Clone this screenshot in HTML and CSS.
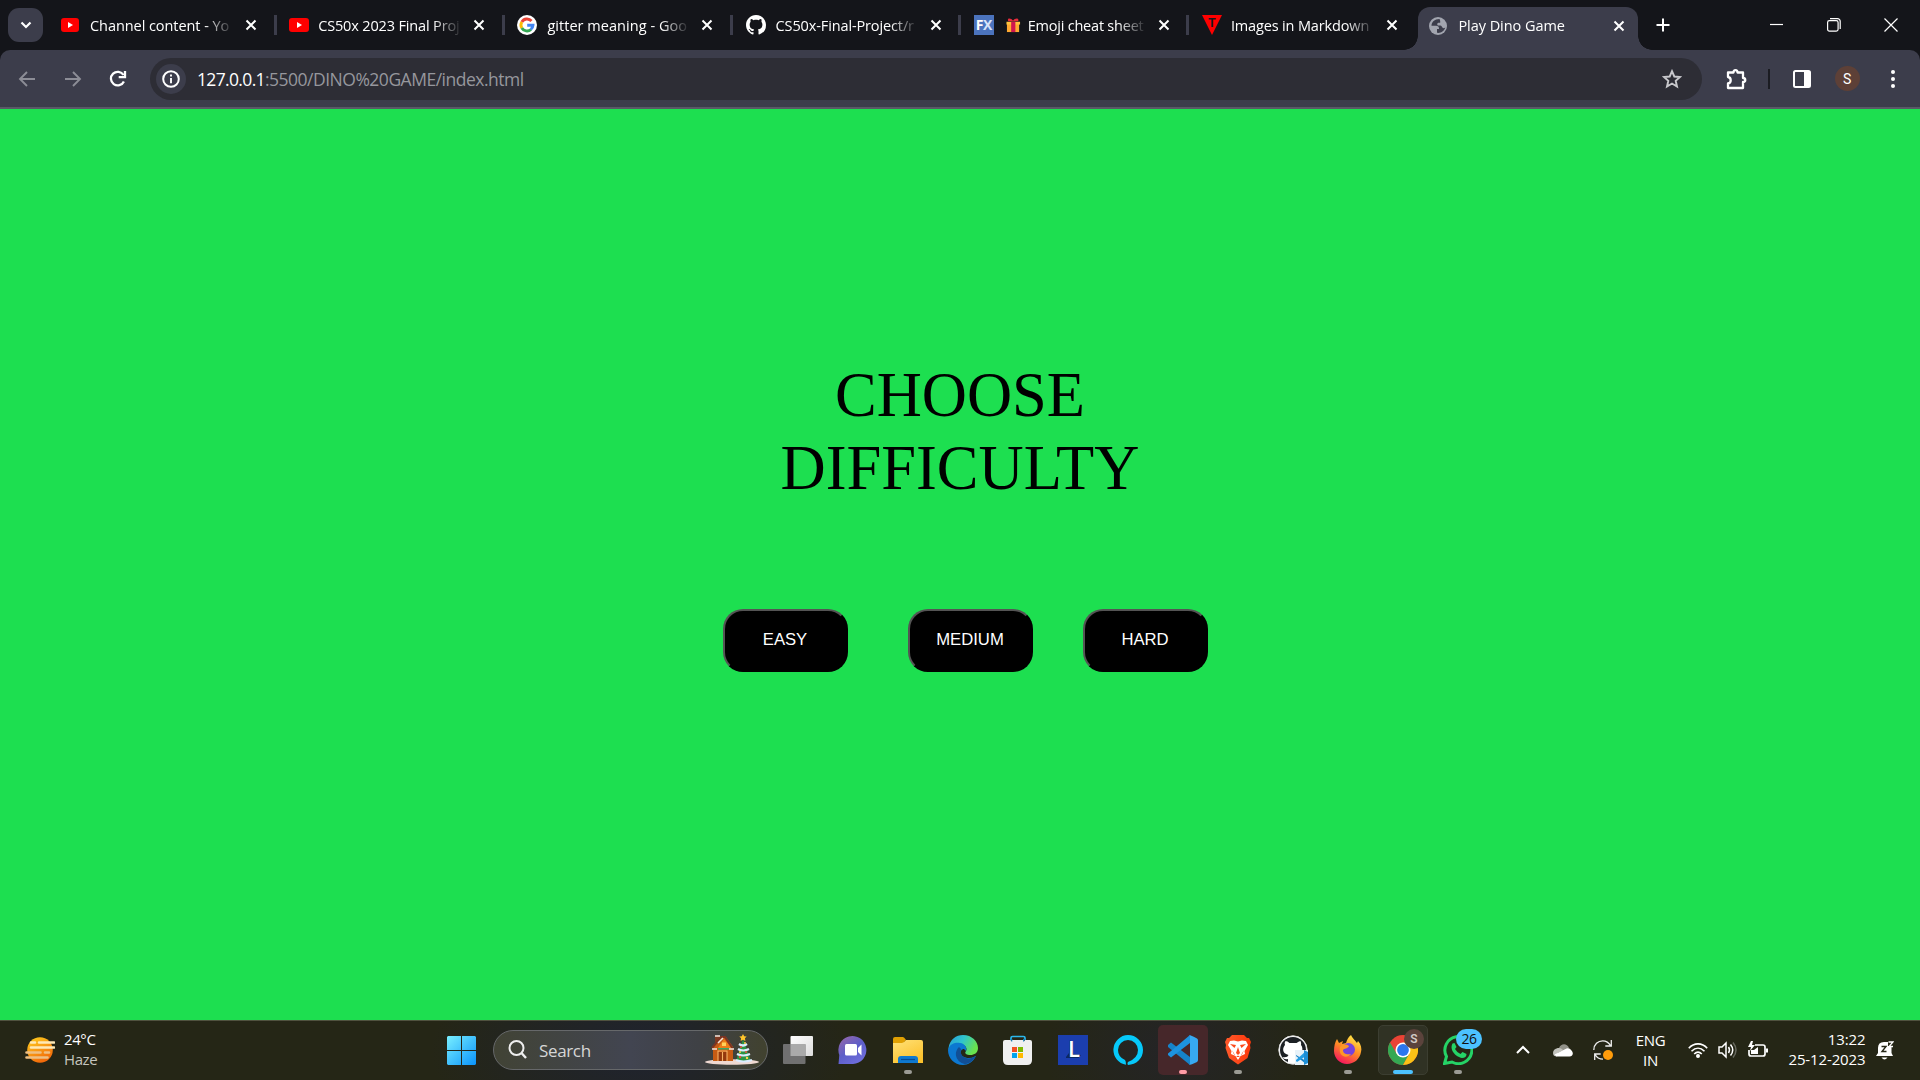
FILE: index.html
```html
<!DOCTYPE html>
<html lang="en">
<head>
<meta charset="utf-8">
<title>Play Dino Game</title>
<link rel="stylesheet" href="styles.css">
</head>
<body>
<header class="tabstrip">
  <div class="tabsearch"><svg width="12" height="8" viewBox="0 0 12 8"><path d="M1.500 1.500 6 6l4.500-4.500" fill="none" stroke="#fff" stroke-width="2.200"/></svg></div>
  <div class="tab">
    <svg class="fav" viewBox="0 0 20 20"><rect x="0" y="3" width="18" height="14" rx="3" fill="#f00"/><path d="M7 7v6l5-3z" fill="#fff"/></svg>
    <span class="title t1">Channel content - Yo</span>
    <svg class="x" viewBox="0 0 12 12"><path d="M1.500 1.500l9 9M10.500 1.500l-9 9"/></svg>
  </div>
  <div class="tab">
    <svg class="fav" viewBox="0 0 20 20"><rect x="0" y="3" width="20" height="14" rx="3" fill="#f00"/><path d="M8 7v6l5-3z" fill="#fff"/></svg>
    <span class="title t2">CS50x 2023 Final Proj</span>
    <svg class="x" viewBox="0 0 12 12"><path d="M1.500 1.500l9 9M10.500 1.500l-9 9"/></svg>
  </div>
  <div class="tab">
    <svg class="fav" viewBox="0 0 20 20"><circle cx="10" cy="10" r="10" fill="#fff"/><g fill="none" stroke-width="2.900"><path d="M4.800 6.900A6 6 0 0 1 14.500 6" stroke="#ea4335"/><path d="M4.800 13A6 6 0 0 1 4.800 6.900" stroke="#fbbc05"/><path d="M14 14.500A6 6 0 0 1 4.800 13" stroke="#34a853"/><path d="M10.200 10.200H16A6 6 0 0 1 13.800 14.500" stroke="#4285f4"/></g></svg>
    <span class="title t3">gitter meaning - Goo</span>
    <svg class="x" viewBox="0 0 12 12"><path d="M1.500 1.500l9 9M10.500 1.500l-9 9"/></svg>
  </div>
  <div class="tab">
    <svg class="fav" viewBox="0 0 16 16"><path fill="#fff" d="M8 0C3.580 0 0 3.580 0 8c0 3.540 2.290 6.530 5.470 7.590.4.070.55-.17.55-.38 0-.19-.01-.82-.01-1.490-2.010.37-2.530-.49-2.690-.94-.09-.23-.48-.94-.82-1.130-.28-.15-.68-.52-.01-.53.63-.01 1.080.58 1.230.82.72 1.210 1.870.87 2.330.66.070-.52.28-.87.51-1.070-1.780-.2-3.640-.89-3.640-3.950 0-.87.31-1.590.82-2.150-.08-.2-.36-1.020.08-2.120 0 0 .67-.21 2.200.82.64-.18 1.320-.27 2-.27s1.360.09 2 .27c1.530-1.040 2.200-.82 2.200-.82.44 1.100.16 1.920.08 2.120.51.56.82 1.270.82 2.150 0 3.070-1.870 3.750-3.650 3.950.29.25.54.73.54 1.480 0 1.070-.01 1.930-.01 2.200 0 .21.15.46.55.38A8.010 8.010 0 0 0 16 8c0-4.420-3.580-8-8-8z"/></svg>
    <span class="title t4">CS50x-Final-Project/r</span>
    <svg class="x" viewBox="0 0 12 12"><path d="M1.500 1.500l9 9M10.500 1.500l-9 9"/></svg>
  </div>
  <div class="tab">
    <span class="fav fx">F<i>X</i></span>
    <span class="title t5"><svg class="gift" viewBox="0 0 16 16"><path d="M1 5h13v10H1z" fill="#ffa931"/><path d="M.500 4h14.500v3H.500z" fill="#ffc33d"/><path d="M5.500 4H10v11H5.500z" fill="#d0164f"/><path d="M2.500 3.500c-2-4 3-4 5-.5 2-3.500 7-3.500 5.500.5z" fill="#e82c3c"/></svg>Emoji cheat sheet</span>
    <svg class="x" viewBox="0 0 12 12"><path d="M1.500 1.500l9 9M10.500 1.500l-9 9"/></svg>
  </div>
  <div class="tab">
    <svg class="fav" viewBox="0 0 20 20"><path d="M0 0h20L10 20z" fill="#f00"/><text x="10" y="12" text-anchor="middle" font-size="12" font-weight="700" font-family="Liberation Sans" fill="#16161b">T</text></svg>
    <span class="title t6">Images in Markdown</span>
    <svg class="x" viewBox="0 0 12 12"><path d="M1.500 1.500l9 9M10.500 1.500l-9 9"/></svg>
  </div>
  <div class="tab active">
    <svg class="fav" viewBox="0 0 20 20"><circle cx="9" cy="10" r="9" fill="#a2a5af"/><path d="M10.500 3C5.500 3 2.500 6 2.500 9.800H6c3.500 0 4 1 4 3.200H8v3.800c4 .6 7.500-2 8.300-5.300-1.300 1-2.800.8-3.300-.5-.4-1.300-1.200-1.500-2.500-1.500H8.800c-1-1-.6-2.400.5-2.700h1.900V4.900c-.2-.6-.3-1.300-.7-1.900z" fill="#3c3d4b"/></svg>
    <span class="title t7">Play Dino Game</span>
    <svg class="x" viewBox="0 0 12 12"><path d="M1.500 1.500l9 9M10.500 1.500l-9 9"/></svg>
  </div>
  <svg class="newtab" viewBox="0 0 14 14"><path d="M7 .5v13M.5 7h13" stroke="#fff" stroke-width="2"/></svg>
  <div class="winctl">
    <svg viewBox="0 0 14 14"><path d="M0 6.500h13" stroke="#fff" stroke-width="1.200"/></svg>
    <svg viewBox="0 0 14 14" fill="none" stroke="#fff" stroke-width="1.200"><rect x=".6" y="2.600" width="10.500" height="10.500" rx="1.800"/><path d="M3 .6h7.500a2.700 2.700 0 0 1 2.700 2.700V11"/></svg>
    <svg viewBox="0 0 14 14"><path d="M.5.500l13 13M13.500.500l-13 13" stroke="#fff" stroke-width="1.200"/></svg>
  </div>
</header>
<nav class="toolbar-wrap">
 <div class="toolbar">
  <svg class="nav" viewBox="0 0 20 20" fill="none" stroke="#8c8d96" stroke-width="1.900"><path d="M18 10H4M10 3l-7 7 7 7"/></svg>
  <svg class="nav" viewBox="0 0 20 20" fill="none" stroke="#8c8d96" stroke-width="1.900"><path d="M2 10h14M10 3l7 7-7 7"/></svg>
  <svg class="nav" viewBox="0 0 20 20" fill="none" stroke="#fff" stroke-width="2.300"><path d="M15.900 12.500A6.800 6.800 0 1 1 15.500 6M17 2v6.200h-6.300"/></svg>
  <div class="omnibox">
    <span class="info"><svg width="18" height="18" viewBox="0 0 18 18"><circle cx="9" cy="9" r="7.800" fill="none" stroke="#fff" stroke-width="2"/><path d="M9 8v5.200M9 4.600v2" stroke="#fff" stroke-width="1.900"/></svg></span>
    <span class="url"><b>127.0.0.1</b>:5500/DINO%20GAME/index.html</span>
    <svg class="star" viewBox="0 0 20 20"><path d="M10 2.200l2.300 5.300 5.700.5-4.300 3.800 1.300 5.700-5-3-5 3 1.300-5.700L2 8l5.700-.5z" fill="none" stroke="#c8c8cc" stroke-width="1.900"/></svg>
  </div>
  <svg class="ext" viewBox="0 0 22 22"><path d="M3 4.500h5.500c0-3.200 4-3.200 4 0h5.500v5.500c3 0 3 4 0 4v6H3v-4.500c3.600-.5 3.600-6 0-6.500z" fill="none" stroke="#fff" stroke-width="2.300" stroke-linejoin="round"/></svg>
  <i class="divider"></i>
  <svg class="panel" viewBox="0 0 18 18"><rect x="1" y="1" width="16" height="16" rx="1.500" fill="none" stroke="#fff" stroke-width="2"/><path d="M11 1h6v16h-6z" fill="#fff"/></svg>
  <span class="avatar">S</span>
  <svg class="dots" viewBox="0 0 6 20" fill="#fff"><circle cx="3" cy="3" r="2"/><circle cx="3" cy="10" r="2"/><circle cx="3" cy="17" r="2"/></svg>
 </div>
</nav>
<main class="page">
  <h1>CHOOSE<br>DIFFICULTY</h1>
  <div class="choices"><button>EASY</button><button>MEDIUM</button><button>HARD</button></div>
</main>
<footer class="taskbar">
  <div class="weather">
    <svg width="30" height="26" viewBox="0 0 30 26"><defs><linearGradient id="sun" x1="0" y1="0" x2=".5" y2="1"><stop offset="0" stop-color="#ffd21f"/><stop offset="1" stop-color="#f26a0a"/></linearGradient></defs><circle cx="15" cy="13" r="12.800" fill="url(#sun)"/><g stroke="#ffe9b5" stroke-width="2.600" stroke-linecap="round"><path d="M6 5.500h4M14 5.500h15M6 10.500h23"/><path d="M1.500 15.500h14M20 15.500h4M1.500 20.500h21" stroke="#eebf83"/></g></svg>
    <div class="temp"><span>24°C</span><em>Haze</em></div>
  </div>
  <svg class="start" viewBox="0 0 29 29"><defs><linearGradient id="win" x1="0" y1="0" x2="1" y2="1"><stop offset="0" stop-color="#79efff"/><stop offset="1" stop-color="#0a93fb"/></linearGradient></defs><path d="M1 0h13v14H0V1zM15 0h13l1 1v13H15zM0 15h14v14H1l-1-1zM15 15h14v13l-1 1H15z" fill="url(#win)"/></svg>
  <div class="search">
    <svg class="mag" viewBox="0 0 20 20" fill="none" stroke="#eee"><circle cx="8.500" cy="8" r="7" stroke-width="2"/><path d="M13.500 13l4.500 5" stroke-width="2.400"/></svg>
    <span>Search</span>
    <svg class="holiday" viewBox="0 0 54 32">
      <ellipse cx="27" cy="28" rx="27" ry="2.800" fill="#efd9d2"/>
      <path d="M10 2h5v7h-5z" fill="#7d3a22"/><path d="M8 13l9-10h4l7 10v14H8z" fill="#c65b13"/><path d="M13 14l6-9 8 9z" fill="#ed7d19"/><path d="M7 14l9-11h4l8 12" fill="none" stroke="#7b3423" stroke-width="2"/><path d="M10 2h5M13 9l5-5M7 15h5M24 15h5" stroke="#f5e6dd" stroke-width="1.500"/><path d="M13 18h9v9h-9z" fill="#94380d"/><path d="M13 27V17h9v10M17.500 18v9" fill="none" stroke="#f7b266" stroke-width="1.100"/><path d="M13 14h11v1.500H13z" fill="#3aa564"/><path d="M17 8.500h4V12h-4z" fill="#ffd058"/>
      <path d="M38 5l8 22H31z" fill="#2b9444"/><path d="M34 10q4 3 8 0M33 15q5 3 11 0M32 20q6 3 13 0M31 26q7 3 16 0" fill="none" stroke="#dcecff" stroke-width="2.200"/><path d="M38 0l1.200 2.300 2.500.3-1.800 1.700.5 2.700L38 5.700 35.600 7l.5-2.700-1.800-1.700 2.500-.3z" fill="#ffc52b"/><g fill="#ef4e3f"><circle cx="36" cy="13" r="1"/><circle cx="41" cy="18" r="1"/><circle cx="35" cy="23" r="1.200"/></g><g fill="#ffd34a"><circle cx="40" cy="9" r="1"/><circle cx="35" cy="18" r="1"/><circle cx="42" cy="24" r="1.200"/></g>
    </svg>
  </div>
  <div class="apps">
    <span class="app"><svg viewBox="0 0 30 30"><defs><linearGradient id="tv" x1="0" y1="0" x2="1" y2="1"><stop offset="0" stop-color="#fff"/><stop offset="1" stop-color="#dcdcdc"/></linearGradient></defs><rect x="7.500" y="1" width="22.500" height="20" rx="1" fill="url(#tv)"/><rect x="0" y="9" width="22.500" height="20" rx="1" fill="#707070"/><path d="M7.500 9h15v12h-15z" fill="#aaa"/></svg></span>
    <span class="app"><svg viewBox="0 0 30 30"><defs><linearGradient id="chat" x1=".1" y1="0" x2=".8" y2="1"><stop offset="0" stop-color="#9667a9"/><stop offset=".5" stop-color="#5d5ec9"/><stop offset="1" stop-color="#7170df"/></linearGradient></defs><path d="M.5 29l.8-9A14 14 0 1 1 15 29z" fill="url(#chat)"/><rect x="7" y="9" width="12" height="11.500" rx="1.500" fill="#fff"/><path d="M20 13l3.500-3.500v11L20 17z" fill="#fff"/></svg></span>
    <span class="app run"><svg viewBox="0 0 30 30"><defs><linearGradient id="fold" x1="0" y1="0" x2=".6" y2="1"><stop offset="0" stop-color="#ffe178"/><stop offset="1" stop-color="#fcc22d"/></linearGradient></defs><path d="M0 4q0-2 2-2h8q1 0 3 3l-3 4H0z" fill="#e0a003"/><path d="M0 8h9q2 0 4-3h15q2 0 2 2v21H0z" fill="url(#fold)"/><path d="M5 28v-4q0-3 3-3h14q3 0 3 3v4z" fill="#0f79cf"/><path d="M8 24.500h14" stroke="#064b93" stroke-width="1.200"/></svg></span>
    <span class="app"><svg viewBox="0 0 30 30"><defs><linearGradient id="edgeA" x1="0" y1="0" x2="1" y2=".4"><stop offset="0" stop-color="#259bd9"/><stop offset=".5" stop-color="#30c4cd"/><stop offset="1" stop-color="#69e34e"/></linearGradient></defs><path d="M.5 13C2 4 8 0 15 0c9 0 15 6.500 15 13 0 5-4 7-7.500 7-4 0-6-1.500-5-3 3-4-1-8-6-8-6 0-9 3-11 6z" fill="url(#edgeA)"/><path d="M0 15C2 8 8 7.500 12 8c5 .5 7 5 6 8l-2-2c-5 0-5 9 5 9 4 0 6-2 7-2-3 6-8 9-13 9C6 30 0 23 0 15z" fill="#0c78d1"/><path d="M11 12c-7 7-1 17 7 17 4-1 8-4 10-8-7 5-17 2-15-7z" fill="#114f96"/></svg></span>
    <span class="app"><svg viewBox="0 0 30 30"><path d="M8 8V3q0-1.500 1.500-1.500h11Q22 1.500 22 3v5" fill="none" stroke="#2cb8ec" stroke-width="1.700"/><path d="M0 7q0-2 2-2h25q2 0 2 2v18q0 5-5 5H5q-5 0-5-5z" fill="#f0f0f0"/><path d="M7.500 5V4h1.300v2.500M22 5V4h-1.300v2.500" stroke="#1996d5"/><path d="M9 12h5v5H9z" fill="#f25022"/><path d="M15 12h5v5h-5z" fill="#7fba00"/><path d="M9 18h5v5H9z" fill="#00a4ef"/><path d="M15 18h5v5h-5z" fill="#ffb900"/></svg></span>
    <span class="app"><svg viewBox="0 0 30 30"><path d="M0 0h30v30H0z" fill="#1b3eae"/><path d="M8 22l3-4V6l1.500-.5L15 19l8 1-2.500 3H8z" fill="#0b2860"/><text x="10" y="21.500" font-family="Open Sans" font-size="22" font-weight="600" fill="#fff">L</text></svg></span>
    <span class="app"><svg viewBox="0 0 30 30"><path fill="#06c9fa" fill-rule="evenodd" d="M15 0a15 15 0 0 1 0 30q-1-1.500 0-3Q25 23 25 15A10 10 0 1 0 5 15Q5 22 12 25q1 1 1 4.800A15 15 0 0 1 15 0z"/></svg></span>
    <span class="app vs run"><svg viewBox="0 0 30 30"><path d="M0 10l3-2.500L22 22v8L0 12z" fill="#1683c9"/><path d="M22 0L0 18.500v1.500l3 2.500L22 8z" fill="#1d93df"/><path d="M21 0q2 0 8 3.500 1 .5 1 2V25q0 1-1 2-6 3-8 3 1 0 1-2V2q0-2-1-2z" fill="#37a9f1"/></svg></span>
    <span class="app run"><svg viewBox="0 0 30 30"><defs><linearGradient id="brv"><stop offset="0" stop-color="#ff5a2b"/><stop offset="1" stop-color="#fb370b"/></linearGradient></defs><path d="M9 0h12l3 3h2l2 4-1 3 .5 3-3 10L15 29.500 6 23 2.500 13 3 10 2 7l2-4h2z" fill="url(#brv)"/><path d="M7 6l4-.5 4 1 4-1 4 .5 2 4-3.500 6 .5 3-4.500 2-2.500 4-2.500-4-4.500-2 .5-3L5 10z" fill="#fff"/><path d="M7 9l6 1-1.500 3zM23 9l-6 1 1.500 3zM15 12l2 6-2 2-2-2zM9 15l3 5-1-.5zM21 15l-3 5 1-.5zM13 22h4l-2-1.500z" fill="#fc4a1c"/></svg></span>
    <span class="app"><svg viewBox="0 0 30 30"><circle cx="15" cy="15" r="14.200" fill="#fff" stroke="#ddd"/><circle cx="15" cy="15" r="13" fill="#1b1f23"/><path d="M10 28v-4q-4 1-5.500-2 5 1 6-2C3 18 5 12 7 10q-1-2 .5-4 2 0 4 2h7q3-2 4-2 1 2 .5 4c3 4 1 10-4 10v8z" fill="#fff"/><path d="M17 15h13v15H17z" fill="#e8f2f9"/><path d="M28 16v13l-10-8v-1l10 6z" fill="#1881c4"/><path d="M28 16l-10 9v1l1 1 9-6z" fill="#249de4"/><path d="M26 15l4 2v11l-4 2z" fill="#1c8ed6"/></svg></span>
    <span class="app run"><svg viewBox="0 0 30 30"><defs><linearGradient id="ff" x1=".8" y1="0" x2=".3" y2="1"><stop offset="0" stop-color="#fff14a"/><stop offset=".5" stop-color="#ff8b24"/><stop offset="1" stop-color="#f5135f"/></linearGradient></defs><path d="M4 4l2 4 4-2-1 3 4-1c1-3 2-6 5-8 1 3 4 5 6 8l1-2c3 3 4 8 3 11-1 7-7 12-14 12S1 23 1 16C1 11 2 7 4 4z" fill="url(#ff)"/><circle cx="15.500" cy="14.500" r="6.500" fill="#7542dc"/><path d="M7 12c3-3 6-3 9-1-1 3-5 2-6 4 0 4 4 5 8 4-4 5-13 3-11-7z" fill="#ff9726"/></svg></span>
    <span class="app chrome"><svg viewBox="0 0 30 30"><circle cx="15" cy="15" r="15" fill="#ea4335"/><path d="M2 7.500A15 15 0 0 0 15 30l6.500-11.500H8.500z" fill="#34a853"/><path d="M15 30A15 15 0 0 0 28 7.500H15l6.500 11z" fill="#fbc116"/><circle cx="15" cy="15" r="7.500" fill="#fff"/><circle cx="15" cy="15" r="5.900" fill="#2b76ed"/></svg><b class="profile">S</b></span>
    <span class="app run"><svg viewBox="0 0 30 30"><path d="M1.500 28.500l2-7A13.500 13.500 0 1 1 9 27z" fill="none" stroke="#25d366" stroke-width="3"/><path d="M9.500 8.500l2-.5 2 4-1.500 2q2 3.500 5.500 5l2-2 4 2q0 4-4.500 4C13 22 6 15 9.500 8.500z" fill="#25d366"/></svg><b class="count">26</b></span>
  </div>
  <div class="tray">
    <svg class="chev" viewBox="0 0 14 10"><path d="M1 8l6-6 6 6" fill="none" stroke="#fff" stroke-width="2"/></svg>
    <svg class="cloud" viewBox="0 0 20 13"><path d="M4 8C1 8 4 4 6 4c2-5 8-5 10 0l-2 3z" fill="#929289"/><path d="M4 12.500q-4 0-4-3.500 0-4 5-5 3-.5 5 2l-5 3z" fill="#c2c2bc"/><path d="M3.500 12.500l-2-2 8-4 4-2q3-1 5 2c2 2 2 6-2 6z" fill="#fff"/></svg>
    <svg class="sync" viewBox="0 0 20 20"><path d="M.8 10C.8 4.500 5 .8 9.700.8c3.500 0 6.300 2 8 5M18.300 0v6h-6M10 19.200c-3.800 0-6.500-2-8-5M1.700 20v-6h6" fill="none" stroke="#eee" stroke-width="1.300"/><circle cx="15" cy="15" r="5" fill="#ff9c0b"/></svg>
    <div class="lang"><span>ENG</span><span>IN</span></div>
    <svg class="wifi" viewBox="0 0 20 15" fill="none" stroke="#fff" stroke-width="1.600"><path d="M.8 5.200C6-.6 14-.6 19.200 5.200M3.500 8.200c4-4 9-4 13 0M6.200 11c2.500-2.500 5.100-2.500 7.600 0"/><circle cx="10" cy="13" r="1.200" fill="#fff"/></svg>
    <svg class="vol" viewBox="0 0 20 18" fill="none" stroke="#fff" stroke-width="1.500"><path d="M1 6h3l4-4v14l-4-4H1zM10.500 6q2 3 0 6M12.500 3.500q4.500 5.500 0 11"/><path d="M15 1.500q6 7.500 0 15" stroke="#66675d"/></svg>
    <svg class="bat" viewBox="0 0 20 17"><path d="M7 4h8q2 0 2 2v7q0 2-2 2H3q-2 0-2-2V9" fill="none" stroke="#fff" stroke-width="1.700"/><path d="M18 7.500h2v4h-2zM3 13V9h3l4-3v7z" fill="#fff"/><path d="M3 0L0 6h3L2 10l5-6H4l1-4z" fill="#fff"/></svg>
    <div class="clock"><span>13:22</span><span>25-12-2023</span></div>
    <svg class="bell" viewBox="0 0 18 19"><path d="M0 15l2-3V7q0-6 6-6h4v4h3.500v7l1.500 3zM5.500 16.500h6q-3 4-6 0z" fill="#fff"/><path d="M12.500 1H17l-4 4.500h4" fill="none" stroke="#fff" stroke-width="1.300"/><path d="M5.500 5.500h4.500l-4 5h4.500" fill="none" stroke="#252616" stroke-width="1.400"/></svg>
  </div>
</footer>
</body>
</html>
```
FILE: styles.css
```css
* { box-sizing: border-box; }
body { margin: 0; width: 1920px; height: 1080px; overflow: hidden; display: flex; flex-direction: column; background: #14151a; font-family: "Open Sans", "Noto Sans", sans-serif; color: #fff; }
svg { display: block; flex: none; }

/* tab strip */
.tabstrip { height: 50px; display: flex; align-items: center; }
.tabsearch { width: 35px; height: 34px; margin: 0 5.500px 0 8px; border-radius: 11px; background: #3c3d4b; display: flex; align-items: center; justify-content: center; flex: none; }
.tab { width: 228.200px; height: 20px; padding-left: 12.500px; display: flex; align-items: center; flex: none; border-right: 3px solid #3c3d4b; }
.tab:nth-child(7) { border-color: transparent; }
.fav { width: 20px; height: 20px; margin-right: 9px; flex: none; }
.fx { background: #4b73bd; font: 700 14px/20px "Open Sans", sans-serif; text-align: center; letter-spacing: -.5px; }
.fx i { font-style: normal; color: #d5e3fa; }
.title { width: 142px; height: 24px; margin-right: 13px; overflow: hidden; white-space: nowrap; font-size: 14.500px; line-height: 25px; letter-spacing: -.15px; flex: none; -webkit-mask-image: linear-gradient(90deg, #000 115px, transparent 144px); mask-image: linear-gradient(90deg, #000 115px, transparent 144px); }
.t1 { letter-spacing: -.06px; }
.t3 { letter-spacing: .04px; padding-left: 1px; }
.t4 { letter-spacing: -.12px; padding-left: 1px; }
.t5 { letter-spacing: -.22px; }
.t7 { letter-spacing: -.05px; }
.gift { display: inline-block; width: 15px; height: 15px; margin: 0 7px 0 3px; vertical-align: -2px; }
.x { width: 12px; height: 12px; fill: none; stroke: #fff; stroke-width: 2; }
.tab.active { position: relative; height: 43px; align-self: flex-end; width: 220px; padding-left: 11px; padding-bottom: 5px; border: 0; border-radius: 12px 12px 0 0; background: #3c3d4b; margin-left: .8px; }
.tab.active .title { line-height: 23px; }
.tab.active::before, .tab.active::after { content: ""; position: absolute; bottom: 0; width: 14px; height: 14px; }
.tab.active::before { left: -14px; background: radial-gradient(circle at 0 0, transparent 13.500px, #3c3d4b 14px); }
.tab.active::after { right: -14px; background: radial-gradient(circle at 100% 0, transparent 13.500px, #3c3d4b 14px); }
.newtab { width: 14px; height: 14px; margin-left: 18px; }
.winctl { margin-left: auto; display: flex; gap: 43px; padding-right: 22px; }
.winctl svg { width: 14px; height: 14px; }

/* toolbar */
.toolbar-wrap { height: 59px; background: #14151a; }
.toolbar { height: 59px; padding: 0 24.500px 0 17px; display: flex; align-items: center; border-radius: 10px 10px 0 0; background: #3c3d4b; border-bottom: 2px solid #595a66; }
.nav { width: 20px; height: 20px; margin-right: 25.500px; }
.omnibox { width: 1552px; height: 42px; margin-left: -3.500px; padding: 0 20px 0 6px; border-radius: 21px; background: #2d2d35; display: flex; align-items: center; flex: none; }
.info { width: 30px; height: 30px; border-radius: 50%; background: #3c3d4b; display: flex; align-items: center; justify-content: center; }
.url { margin-left: 11px; font-size: 17.500px; letter-spacing: -.5px; color: #96979d; }
.url b { font-weight: 400; color: #fff; letter-spacing: -.65px; }
.star { width: 20px; height: 20px; margin-left: auto; }
.ext { width: 22px; height: 22px; margin-left: 23px; }
.divider { width: 2px; height: 20px; margin-left: 21px; background: #1b1c22; }
.panel { width: 18px; height: 18px; margin-left: 23px; }
.avatar { width: 25px; height: 25px; margin-left: 24px; border-radius: 50%; background: #5d4037; font: 14px/26px Roboto, sans-serif; text-align: center; }
.dots { width: 6px; height: 20px; margin-left: 30px; }

/* game page */
.page { height: 911px; background: #1ddf50; display: flex; flex-direction: column; align-items: center; color: #000; }
h1 { margin: 250px 0 0; font: 400 62.500px/73px "Liberation Serif", serif; text-align: center; }
.choices { display: flex; padding: 104px 0 0 11px; }
button { width: 125px; height: 63px; padding: 0 1px 2px 0; border: 2px outset #000; border-radius: 20px; background: #000; color: #fff; font: 16.667px "Liberation Sans", sans-serif; }
button:nth-child(2) { margin: 0 50px 0 60px; }

/* taskbar */
.taskbar { height: 60px; border-top: 1px solid #50523f; display: flex; align-items: center; background: radial-gradient(ellipse 210px 110px at 640px 30px, #1f2330, transparent), radial-gradient(ellipse 130px 100px at 1175px 30px, #242427, transparent), #252616; }
.weather { width: 446px; padding-left: 25px; display: flex; align-items: center; }
.weather svg { margin-bottom: 2px; }
.temp { margin: 0 0 3px 9px; display: flex; flex-direction: column; font-size: 15px; line-height: 20px; letter-spacing: -.4px; }
.temp em { font-style: normal; color: #c5c5be; }
.start { width: 29px; height: 29px; margin-left: 1px; }
.search { width: 275px; height: 40px; margin: 0 0 1px 17px; padding: 0 8px 0 14px; border: 1px solid #66686a; border-radius: 20px; background: linear-gradient(90deg, #414335, #424551 50%, #3f4145 75%, #41422f); display: flex; align-items: center; flex: none; }
.mag { width: 20px; height: 20px; }
.search span { margin-left: 11px; font-size: 17px; letter-spacing: -.35px; color: #d6d6d6; }
.holiday { width: 54px; height: 32px; margin-left: auto; }
.apps { margin: 0 0 1px 2.500px; display: flex; flex: none; }
.app { position: relative; width: 50px; height: 50px; margin: 0 2.500px; display: flex; align-items: center; justify-content: center; border-radius: 5px; }
.app svg { width: 30px; height: 30px; }
.run::after, .chrome::after { content: ""; position: absolute; left: 21px; bottom: 1px; width: 8px; height: 4px; border-radius: 2px; background: #9b9b94; }
.vs { background: #46272a; }
.vs::after { background: #ff9ba5; }
.chrome { background: #303224; border: 1px solid #3c3e31; }
.chrome::after { left: 14px; bottom: 0; width: 20px; background: #4cc2ff; }
.profile, .count { position: absolute; text-align: center; }
.profile { left: 25px; top: 3px; width: 20px; height: 20px; border-radius: 50%; background: #5b433c; font: 600 12px/20px Roboto, sans-serif; color: #d0c8c4; }
.count { left: 23px; top: 4px; width: 26px; height: 20px; border-radius: 10px; background: #4cc2ff; color: #111; font: 14px/20px "Open Sans", sans-serif; letter-spacing: -.5px; }
.tray { display: flex; align-items: center; margin: 0 0 1px 30px; flex: none; }
.chev { width: 14px; height: 10px; }
.cloud { width: 20px; height: 13px; margin-left: 23px; }
.sync { width: 20px; height: 20px; margin-left: 20px; }
.lang { width: 36px; margin-left: 20px; display: flex; flex-direction: column; text-align: center; font-size: 15px; line-height: 20px; letter-spacing: -.3px; }
.wifi { width: 20px; height: 15px; margin-left: 19px; }
.vol { width: 20px; height: 18px; margin-left: 10px; }
.bat { width: 20px; height: 17px; margin: 0 0 2px 10px; }
.clock { width: 88px; margin: 0 0 3px 10px; display: flex; flex-direction: column; text-align: right; font-size: 15px; line-height: 20px; letter-spacing: -.12px; white-space: nowrap; }
.bell { width: 18px; height: 19px; margin-left: 10px; }
```
